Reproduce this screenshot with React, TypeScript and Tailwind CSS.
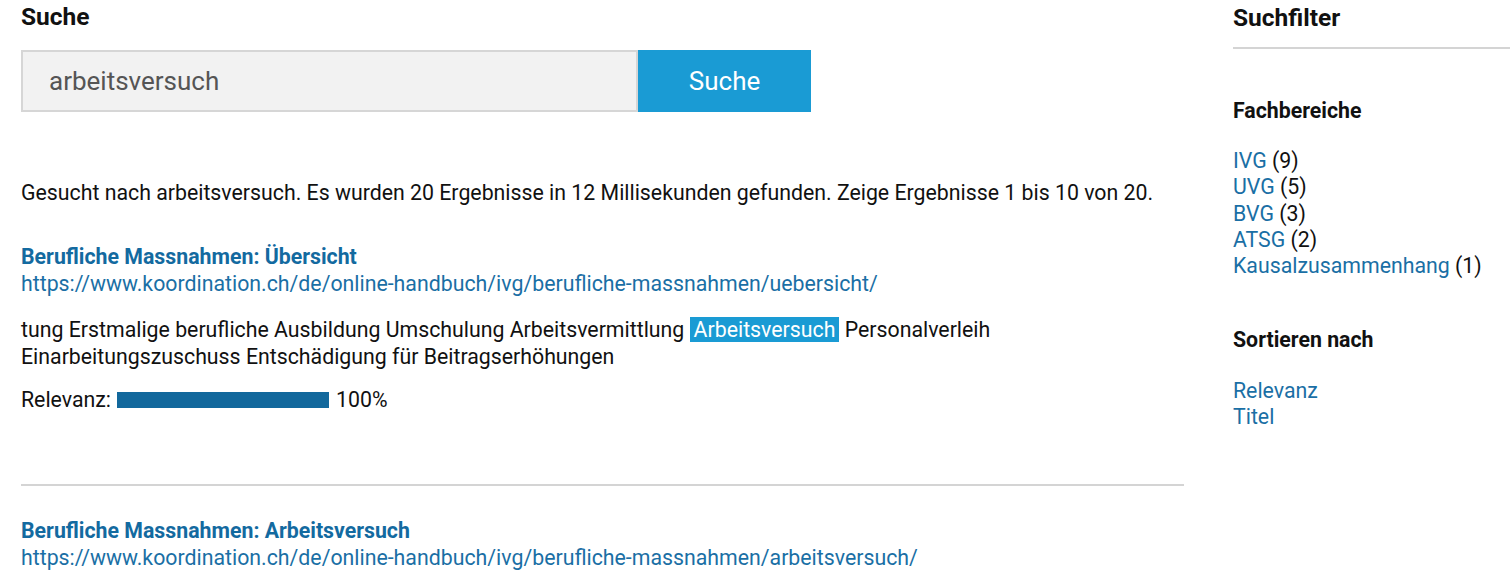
const facets = [
  { name: 'IVG', count: 9 },
  { name: 'UVG', count: 5 },
  { name: 'BVG', count: 3 },
  { name: 'ATSG', count: 2 },
  { name: 'Kausalzusammenhang', count: 1 },
]

function Result({
  title,
  url,
  children,
}: {
  title: string
  url: string
  children?: React.ReactNode
}) {
  return (
    <div>
      <a className="block font-bold text-[#136aa0] leading-[27px]">{title}</a>
      <a className="block text-[#1a6fa5] leading-[27px]">{url}</a>
      {children}
    </div>
  )
}

export default function App() {
  return (
    <div className="flex gap-[49px] pl-[21px] pt-[3px] font-['Roboto',sans-serif] text-[21.3px] text-[#111]">
      <main className="w-[1163px] shrink-0">
        <h2 className="text-[24.5px] font-bold leading-[28px]">Suche</h2>
        <form className="mt-[19px] flex">
          <div className="flex h-[62px] w-[617px] items-center border-2 border-[#d6d6d6] bg-[#f2f2f2] pl-[26px] text-[26px] text-[#555]">
            arbeitsversuch
          </div>
          <button
            type="button"
            className="h-[62px] w-[173px] bg-[#1a9bd4] text-[26px] text-white"
          >
            Suche
          </button>
        </form>

        <p className="mt-[67px] leading-[27px]">
          Gesucht nach arbeitsversuch. Es wurden 20 Ergebnisse in 12 Millisekunden
          gefunden. Zeige Ergebnisse 1 bis 10 von 20.
        </p>

        <div className="mt-[37px]">
          <Result
            title="Berufliche Massnahmen: Übersicht"
            url="https://www.koordination.ch/de/online-handbuch/ivg/berufliche-massnahmen/uebersicht/"
          >
            <p className="mt-[19px] leading-[27px]">
              tung Erstmalige berufliche Ausbildung Umschulung Arbeitsvermittlung{' '}
              <mark className="bg-[#1a9bd4] px-[4px] text-white">Arbeitsversuch</mark>{' '}
              Personalverleih
              <br />
              Einarbeitungszuschuss Entschädigung für Beitragserhöhungen
            </p>
            <div className="mt-[16px] flex items-center leading-[27px]">
              <span>Relevanz:</span>
              <span className="ml-[6px] h-[16px] w-[212px] bg-[#12689c]" />
              <span className="ml-[7px]">100%</span>
            </div>
          </Result>
        </div>

        <hr className="mt-[71px] border-t-2 border-[#d4d4d4]" />

        <div className="mt-[31px]">
          <Result
            title="Berufliche Massnahmen: Arbeitsversuch"
            url="https://www.koordination.ch/de/online-handbuch/ivg/berufliche-massnahmen/arbeitsversuch/"
          />
        </div>
      </main>

      <aside className="flex-1">
        <h2 className="text-[24.5px] font-bold leading-[30px]">Suchfilter</h2>
        <hr className="mt-[14px] border-t-2 border-[#d4d4d4]" />

        <h3 className="mt-[49px] font-bold leading-[26px]">Fachbereiche</h3>
        <ul className="mt-[24px]">
          {facets.map((f) => (
            <li key={f.name} className="leading-[26.3px]">
              <a className="text-[#1a6fa5]">{f.name}</a> ({f.count})
            </li>
          ))}
        </ul>

        <h3 className="mt-[48px] font-bold leading-[26px]">Sortieren nach</h3>
        <ul className="mt-[25px]">
          <li className="leading-[26px]">
            <a className="text-[#1a6fa5]">Relevanz</a>
          </li>
          <li className="leading-[26px]">
            <a className="text-[#1a6fa5]">Titel</a>
          </li>
        </ul>
      </aside>
    </div>
  )
}
